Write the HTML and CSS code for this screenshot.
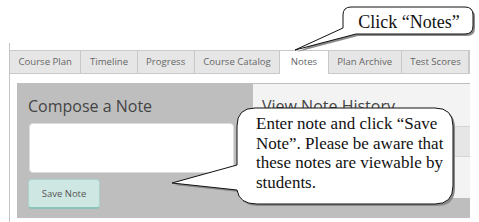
FILE: index.html
```html
<!DOCTYPE html>
<html lang="en">
<head>
    <meta charset="UTF-8" />
    <title>Notes - Advising</title>
    <link rel="stylesheet" href="styles.css">
</head>
<body>
    <div class="page">
        <div class="container">
            <ul class="tabs">
                <li>Course Plan</li>
                <li>Timeline</li>
                <li>Progress</li>
                <li>Course Catalog</li>
                <li class="active">Notes</li>
                <li>Plan Archive</li>
                <li>Test Scores</li>
            </ul>

            <div class="panel">
                <div class="compose">
                    <h2>Compose a Note</h2>
                    <textarea class="note-box"></textarea>
                    <button class="save-btn">Save Note</button>
                </div>
                <div class="history">
                    <h2>View Note History</h2>
                    <div class="history-row"></div>
                </div>
            </div>
        </div>

        <!-- callouts -->
        <svg class="callouts" width="479" height="222" viewBox="0 0 479 222">
            <path class="shadow" transform="translate(2,2)" d="M351,7 H465 Q473,7 473,15 V26 Q473,34 465,34 H356 L295,50 L343,28 V15 Q343,7 351,7 Z" />
            <path class="bubble" d="M351,7 H465 Q473,7 473,15 V26 Q473,34 465,34 H356 L295,50 L343,28 V15 Q343,7 351,7 Z" />
            <path class="shadow" transform="translate(2,2)" d="M255,108 H435 Q453,108 453,126 V186 Q453,204 435,204 H257 Q239,204 237,190 L172,183 L237,165 V126 Q237,108 255,108 Z" />
            <path class="bubble" d="M255,108 H435 Q453,108 453,126 V186 Q453,204 435,204 H257 Q239,204 237,190 L172,183 L237,165 V126 Q237,108 255,108 Z" />
        </svg>
        <div class="callout-text tip-notes">Click “Notes”</div>
        <div class="callout-text tip-save">Enter note and click “Save<br>Note”. Please be aware that<br>these notes are viewable by<br>students.</div>
    </div>
</body>
</html>
```

FILE: styles.css
```css
body {
    margin: 0;
    background: white;
    font-family: 'Open Sans', sans-serif;
    color: #555;
}

.page {
    position: relative;
    width: 479px;
    height: 222px;
    padding-top: 43px;
    box-sizing: border-box;
    overflow: hidden;
}

.container {
    margin-left: 9px;
    width: 461px;
    height: 180px;
    padding-top: 7px;
    border-left: 1px solid #c4c4c4;
    box-sizing: border-box;
}

.tabs {
    list-style: none;
    margin: 0;
    padding: 0;
    display: flex;
    background: #e6e6e6;
    border-top: 1px solid #c9c9c9;
    border-bottom: 1px solid #c9c9c9;
    border-right: 2px solid #c9c9c9;
    height: 22px;
}

.tabs li {
    padding: 0 8.5px;
    font-size: 9.6px;
    line-height: 22px;
    color: #666;
    border-right: 1px solid #c9c9c9;
    white-space: nowrap;
}

.tabs li.active {
    padding: 0 10.5px;
    background: white;
    height: 23px;
}

.panel {
    display: flex;
    margin: 9px 0 0 7px;
    height: 135px;
    background: #bebebe;
}

.compose {
    width: 235px;
    padding: 12px 0 0 11px;
    box-sizing: border-box;
}

h2 {
    margin: 0;
    font-size: 16px;
    font-weight: normal;
    line-height: 22px;
    color: #444;
}

.note-box {
    display: block;
    margin: 6px 0 0 1px;
    width: 205px;
    height: 50px;
    box-sizing: border-box;
    border: 1px solid #ddd;
    border-radius: 4px;
    background: white;
    resize: none;
}

.save-btn {
    display: block;
    margin-top: 6px;
    width: 72px;
    height: 30px;
    background: #cfe7e3;
    color: #555;
    font-family: 'Open Sans', sans-serif;
    font-size: 9.5px;
    border: 1px solid #a9d3cc;
    border-bottom: 2px solid #8cc3ba;
    border-radius: 4px;
}

.history {
    flex: 1;
    margin: 1px 0 20px 1px;
    padding-top: 11px;
    background: #f3f3f3;
}

.history h2 {
    padding-left: 9px;
}

.history-row {
    margin-top: 9px;
    height: 29px;
    background: #e6e6e6;
    border-top: 1px solid #d6d6d6;
    border-bottom: 1px solid #d6d6d6;
}

.callouts {
    position: absolute;
    left: 0;
    top: 0;
}

.callouts .bubble {
    fill: white;
    stroke: #111;
    stroke-width: 1;
}

.callouts .shadow {
    fill: #8a8a8a;
}

.callout-text {
    position: absolute;
    font-family: 'Liberation Serif', serif;
    color: #111;
}

.tip-notes {
    left: 343px;
    top: 12px;
    width: 132px;
    text-align: center;
    font-size: 18px;
    line-height: 21px;
}

.tip-save {
    left: 256px;
    top: 114px;
    font-size: 17px;
    line-height: 19.6px;
}
```
